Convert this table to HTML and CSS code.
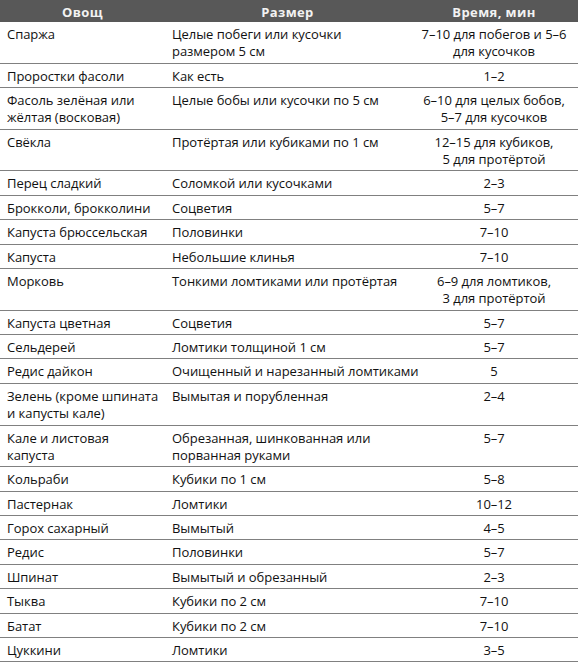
FILE: index.html
```html
<!DOCTYPE html>
<html lang="ru">
<head>
<meta charset="utf-8">
<title>Овощи</title>
<link rel="stylesheet" href="styles.css">
</head>
<body>
<table class="veg">
  <colgroup>
    <col class="c-veg">
    <col class="c-size">
    <col class="c-time">
  </colgroup>
  <thead>
    <tr><th>Овощ</th><th>Размер</th><th>Время, мин</th></tr>
  </thead>
  <tbody>
    <tr><td>Спаржа</td><td>Целые побеги или кусочки<br>размером 5 см</td><td class="t">7–10 для побегов и 5–6<br>для кусочков</td></tr>
    <tr><td>Проростки фасоли</td><td>Как есть</td><td class="t">1–2</td></tr>
    <tr><td>Фасоль зелёная или<br>жёлтая (восковая)</td><td>Целые бобы или кусочки по 5 см</td><td class="t">6–10 для целых бобов,<br>5–7 для кусочков</td></tr>
    <tr><td>Свёкла</td><td>Протёртая или кубиками по 1 см</td><td class="t">12–15 для кубиков,<br>5 для протёртой</td></tr>
    <tr><td>Перец сладкий</td><td>Соломкой или кусочками</td><td class="t">2–3</td></tr>
    <tr><td>Брокколи, брокколини</td><td>Соцветия</td><td class="t">5–7</td></tr>
    <tr><td>Капуста брюссельская</td><td>Половинки</td><td class="t">7–10</td></tr>
    <tr><td>Капуста</td><td>Небольшие клинья</td><td class="t">7–10</td></tr>
    <tr><td>Морковь</td><td>Тонкими ломтиками или протёртая</td><td class="t">6–9 для ломтиков,<br>3 для протёртой</td></tr>
    <tr><td>Капуста цветная</td><td>Соцветия</td><td class="t">5–7</td></tr>
    <tr><td>Сельдерей</td><td>Ломтики толщиной 1 см</td><td class="t">5–7</td></tr>
    <tr><td>Редис дайкон</td><td>Очищенный и нарезанный ломтиками</td><td class="t">5</td></tr>
    <tr><td>Зелень (кроме шпината<br>и капусты кале)</td><td>Вымытая и порубленная</td><td class="t">2–4</td></tr>
    <tr><td>Кале и листовая<br>капуста</td><td>Обрезанная, шинкованная или<br>порванная руками</td><td class="t">5–7</td></tr>
    <tr><td>Кольраби</td><td>Кубики по 1 см</td><td class="t">5–8</td></tr>
    <tr><td>Пастернак</td><td>Ломтики</td><td class="t">10–12</td></tr>
    <tr><td>Горох сахарный</td><td>Вымытый</td><td class="t">4–5</td></tr>
    <tr><td>Редис</td><td>Половинки</td><td class="t">5–7</td></tr>
    <tr><td>Шпинат</td><td>Вымытый и обрезанный</td><td class="t">2–3</td></tr>
    <tr><td>Тыква</td><td>Кубики по 2 см</td><td class="t">7–10</td></tr>
    <tr><td>Батат</td><td>Кубики по 2 см</td><td class="t">7–10</td></tr>
    <tr><td>Цуккини</td><td>Ломтики</td><td class="t">3–5</td></tr>
  </tbody>
</table>
</body>
</html>
```

FILE: styles.css
```css
html, body {
  margin: 0;
  padding: 0;
  background: #ffffff;
}

body {
  font-family: "Open Sans", "DejaVu Sans", sans-serif;
  font-size: 13px;
  color: #111111;
}

.veg {
  width: 578px;
  border-collapse: collapse;
  table-layout: fixed;
}

.c-veg { width: 165px; }
.c-size { width: 245px; }
.c-time { width: 168px; }

.veg th {
  background: #585858;
  color: #f2f2f2;
  font-weight: 700;
  font-size: 13px;
  letter-spacing: 0.4px;
  line-height: 17px;
  padding: 4px 0 1px;
  text-align: center;
}

.veg td {
  vertical-align: top;
  white-space: nowrap;
  letter-spacing: -0.05px;
  line-height: 17.3px;
  padding: 4px 0 2.1px 7px;
  border-bottom: 1px solid #808080;
  text-align: left;
}

.veg td.t {
  text-align: center;
  padding-left: 0;
  padding-right: 0;
}
```
